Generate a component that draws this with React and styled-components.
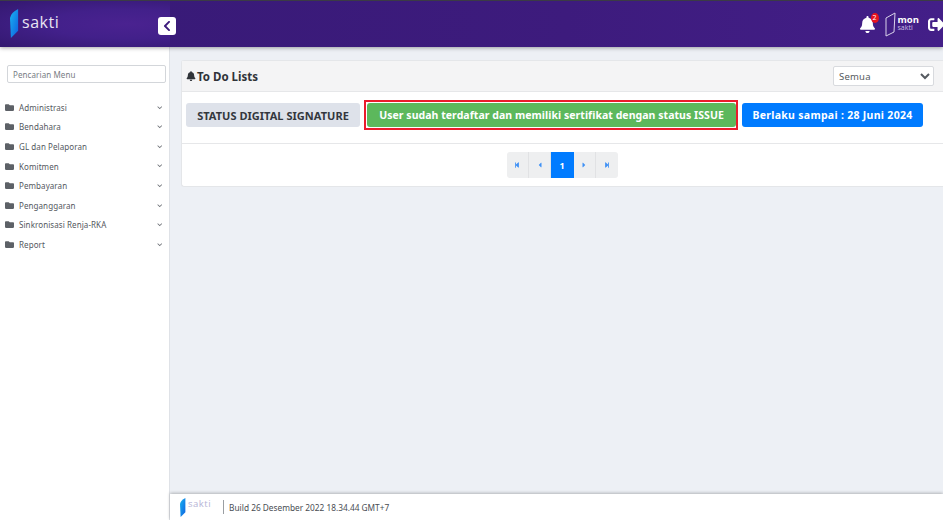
import React from "react";
import styled, { createGlobalStyle } from "styled-components";
import {
	FaBell,
	FaCaretLeft,
	FaCaretRight,
	FaChevronDown,
	FaChevronLeft,
	FaFolder,
	FaSignOutAlt,
	FaStepBackward,
	FaStepForward,
} from "react-icons/fa";

const GlobalStyle = createGlobalStyle`
	html, body {
		margin: 0;
		height: 100%;
		overflow: hidden;
	}
	body {
		font-family: "Noto Sans", "Open Sans", sans-serif;
		color: #33373d;
	}
	* {
		box-sizing: border-box;
	}
`;

const Page = styled.div`
	width: 943px;
	height: 520px;
	display: flex;
	flex-direction: column;
	overflow: hidden;
	background: #edf0f5;
`;

const TopBar = styled.header`
	flex: 0 0 47px;
	display: flex;
	position: relative;
	z-index: 2;
	border-top: 1px solid #3b3b45;
	background: linear-gradient(90deg, #371a76 0%, #3d1b7d 60%, #431f88 100%);
	box-shadow: 0 1px 4px rgba(0, 0, 0, 0.35);
`;

const Brand = styled.div`
	flex: 0 0 170px;
	display: flex;
	align-items: flex-start;
	gap: 3px;
	padding: 7px 0 0 10px;
	background: radial-gradient(ellipse at 75% 50%, #4a2290 0%, #42208a 45%, #33186f 100%);
`;

const BrandName = styled.span`
	font-family: "Open Sans", sans-serif;
	font-size: ${(p) => p.$size}px;
	line-height: 1;
	letter-spacing: 0.5px;
	color: ${(p) => p.$color};
	margin-top: ${(p) => p.$top}px;
`;

const Collapse = styled.button`
	position: absolute;
	left: 158px;
	top: 15.5px;
	width: 18px;
	height: 18px;
	padding: 0;
	border: none;
	border-radius: 3px;
	display: flex;
	align-items: center;
	justify-content: center;
	background: #fff;
	color: #3d1b7d;
	font-size: 12px;
`;

const TopActions = styled.div`
	margin-left: auto;
	display: flex;
	align-items: center;
	gap: 9px;
	margin-right: -2px;
	color: #fff;
`;

const BellWrap = styled.div`
	position: relative;
	display: flex;
	font-size: 17px;
`;

const BellBadge = styled.span`
	position: absolute;
	top: -3px;
	right: -3px;
	width: 8px;
	height: 10px;
	border-radius: 50%;
	background: #e8131f;
	color: #fff;
	font-size: 7px;
	line-height: 10px;
	text-align: center;
`;

const MonLogo = styled.div`
	display: flex;
	align-items: center;
	gap: 2px;
`;

const MonText = styled.div`
	display: flex;
	flex-direction: column;
	font-family: "Open Sans", sans-serif;
	line-height: 8px;
`;

const MonTop = styled.span`
	font-size: 9.5px;
	font-weight: 700;
`;

const MonSub = styled.span`
	font-size: 7px;
	color: #c9bde4;
`;

const ExitIcon = styled.span`
	display: flex;
	font-size: 17px;
`;

const Body = styled.div`
	flex: 1;
	display: flex;
	min-height: 0;
`;

const Sidebar = styled.aside`
	flex: 0 0 170px;
	padding: 18px 0 0;
	background: #fff;
	border-right: 1px solid #dfe2e7;
`;

const SearchInput = styled.input`
	display: block;
	width: 159px;
	height: 18px;
	margin: 0 0 14.5px 7px;
	padding: 0 5px;
	border: 1px solid #d3d6da;
	border-radius: 2px;
	font-family: inherit;
	font-size: 8px;
	letter-spacing: 0.1px;
	&::placeholder {
		color: #777c83;
		opacity: 1;
	}
`;

const Menu = styled.ul`
	list-style: none;
	margin: 0;
	padding: 0;
`;

const MenuItem = styled.li`
	height: 19.6px;
	display: flex;
	align-items: center;
	padding: 0 7px 0 5px;
	font-size: 8px;
	letter-spacing: 0.08px;
	color: #54585e;
`;

const FolderIcon = styled(FaFolder)`
	flex: none;
	font-size: 9px;
	margin-right: 5px;
	color: #5d6167;
`;

const MenuArrow = styled(FaChevronDown)`
	margin-left: auto;
	font-size: 5.5px;
	color: #6c7076;
`;

const Main = styled.main`
	flex: 1;
	min-width: 0;
	display: flex;
	flex-direction: column;
`;

const Content = styled.div`
	flex: 1;
	padding: 13px 0 0 11px;
`;

const Card = styled.section`
	background: #fff;
	border: 1px solid #e4e6e9;
	border-right: none;
	border-radius: 3px 0 0 3px;
`;

const CardHead = styled.div`
	height: 31px;
	display: flex;
	align-items: center;
	justify-content: space-between;
	padding: 0 9px 0 4px;
	background: #f4f4f5;
	border-bottom: 1px solid #e6e7e9;
`;

const CardTitle = styled.h3`
	display: flex;
	align-items: center;
	gap: 1px;
	margin: 0;
	font-size: 11.5px;
	font-weight: 700;
	color: #2f3338;
`;

const FilterSelect = styled.select`
	width: 101px;
	height: 20px;
	padding: 0 1px;
	background: #fff;
	border: 1px solid #d8dade;
	border-radius: 2px;
	font-family: inherit;
	font-size: 9.5px;
	letter-spacing: 0.2px;
	color: #555a60;
`;

const StatusRow = styled.div`
	height: 52px;
	display: flex;
	align-items: flex-start;
	padding: 11px 0 0 4px;
	border-bottom: 1px solid #e6e7e9;
`;

const Badge = styled.span`
	height: 24px;
	display: flex;
	align-items: center;
	justify-content: center;
	width: ${(p) => p.$width}px;
	border-radius: 3px;
	background: ${(p) => p.$bg};
	color: ${(p) => p.$color};
	font-size: ${(p) => p.$size}px;
	font-weight: 700;
	letter-spacing: ${(p) => p.$spacing}px;
`;

const Highlight = styled.div`
	margin: -3px 4px 0 4px;
	padding: 1px 0 1px 1px;
	border: 2px solid #ea1c2c;
`;

const PagerRow = styled.div`
	height: 42px;
	display: flex;
	justify-content: center;
	padding: 8px 0 0 0;
`;

const PagerBtn = styled.button`
	width: 22.4px;
	height: 26px;
	display: flex;
	align-items: center;
	justify-content: center;
	padding: 0;
	border: none;
	border-right: 1px solid ${(p) => (p.$active ? "#007bff" : "#e1e2e4")};
	background: ${(p) => (p.$active ? "#007bff" : "#eeeff0")};
	color: ${(p) => (p.$active ? "#fff" : "#3f91f5")};
	font-family: inherit;
	font-size: ${(p) => (p.$active ? 9 : p.$size || 6)}px;
	font-weight: 700;
	&:first-child {
		border-radius: 3px 0 0 3px;
	}
	&:last-child {
		border-radius: 0 3px 3px 0;
		border-right: none;
	}
`;

const Footer = styled.footer`
	flex: 0 0 26px;
	display: flex;
	align-items: center;
	padding-left: 10px;
	background: #fff;
	box-shadow: 0 -1px 3px rgba(0, 0, 0, 0.25);
`;

const FooterBrand = styled.div`
	display: flex;
	align-items: flex-start;
	gap: 2px;
	padding-right: 13px;
	margin-right: 5px;
	position: relative;
	&::after {
		content: "";
		position: absolute;
		right: 0;
		top: 3px;
		width: 1px;
		height: 14px;
		background: #9a9ea3;
	}
`;

const BuildText = styled.span`
	font-size: 8.3px;
	color: #494d53;
`;

const menuItems = [
	"Administrasi",
	"Bendahara",
	"GL dan Pelaporan",
	"Komitmen",
	"Pembayaran",
	"Penganggaran",
	"Sinkronisasi Renja-RKA",
	"Report",
];

const SaktiMark = ({ width, height }) => (
	<svg width={width} height={height} viewBox="0 0 10 32">
		<defs>
			<linearGradient id="saktiMark" x1="0" y1="0" x2="1" y2="1">
				<stop offset="0" stopColor="#19b5f1" />
				<stop offset="1" stopColor="#0f5fe0" />
			</linearGradient>
		</defs>
		<path d="M9 0 L9 24 L1 32 L0 10 Q1 4 9 0 Z" fill="url(#saktiMark)" />
	</svg>
);

export default function App() {
	return (
		<Page>
			<GlobalStyle />
			<TopBar>
				<Brand>
					<SaktiMark width={9} height={31} />
					<BrandName $size={16} $color="#e8e4f2" $top={6}>
						sakti
					</BrandName>
				</Brand>
				<Collapse>
					<FaChevronLeft />
				</Collapse>
				<TopActions>
					<BellWrap>
						<FaBell />
						<BellBadge>2</BellBadge>
					</BellWrap>
					<MonLogo>
						<svg width="11" height="25" viewBox="0 0 11 25" fill="none" stroke="#d9d2ea" strokeWidth="1">
							<path d="M1 6 L10 1 L9 20 L1 24 Z" />
						</svg>
						<MonText>
							<MonTop>mon</MonTop>
							<MonSub>sakti</MonSub>
						</MonText>
					</MonLogo>
					<ExitIcon>
						<FaSignOutAlt />
					</ExitIcon>
				</TopActions>
			</TopBar>
			<Body>
				<Sidebar>
					<SearchInput placeholder="Pencarian Menu" />
					<Menu>
						{menuItems.map((item) => (
							<MenuItem key={item}>
								<FolderIcon />
								{item}
								<MenuArrow />
							</MenuItem>
						))}
					</Menu>
				</Sidebar>
				<Main>
					<Content>
						<Card>
							<CardHead>
								<CardTitle>
									<FaBell size={10} />
									To Do Lists
								</CardTitle>
								<FilterSelect defaultValue="Semua">
									<option>Semua</option>
								</FilterSelect>
							</CardHead>
							<StatusRow>
								<Badge $width={174} $bg="#dee2ea" $color="#33373d" $size={11} $spacing={0.03}>
									STATUS DIGITAL SIGNATURE
								</Badge>
								<Highlight>
									<Badge $width={369} $bg="#5cb85c" $color="#fff" $size={10.5} $spacing={0.05}>
										User sudah terdaftar dan memiliki sertifikat dengan status ISSUE
									</Badge>
								</Highlight>
								<Badge $width={181} $bg="#007bff" $color="#fff" $size={10.5} $spacing={0.3}>
									Berlaku sampai : 28 Juni 2024
								</Badge>
							</StatusRow>
							<PagerRow>
								<PagerBtn>
									<FaStepBackward />
								</PagerBtn>
								<PagerBtn $size={8}>
									<FaCaretLeft />
								</PagerBtn>
								<PagerBtn $active>1</PagerBtn>
								<PagerBtn $size={8}>
									<FaCaretRight />
								</PagerBtn>
								<PagerBtn>
									<FaStepForward />
								</PagerBtn>
							</PagerRow>
						</Card>
					</Content>
					<Footer>
						<FooterBrand>
							<SaktiMark width={6} height={21} />
							<BrandName $size={9.5} $color="#b5b3d6" $top={2}>
								sakti
							</BrandName>
						</FooterBrand>
						<BuildText>Build 26 Desember 2022 18.34.44 GMT+7</BuildText>
					</Footer>
				</Main>
			</Body>
		</Page>
	);
}
